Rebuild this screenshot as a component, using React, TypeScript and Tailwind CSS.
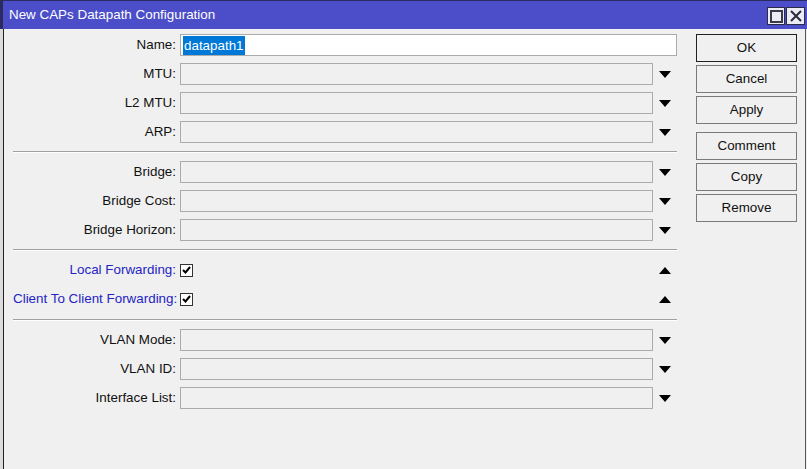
import React from "react";

const font = { fontFamily: '"Liberation Sans", Arial, sans-serif' };

function DownArrow() {
  return (
    <svg width="12" height="7" viewBox="0 0 12 7" className="block">
      <polygon points="0,0 12,0 6,7" fill="#000" />
    </svg>
  );
}

function UpArrow() {
  return (
    <svg width="12" height="7" viewBox="0 0 12 7" className="block">
      <polygon points="0,7 12,7 6,0" fill="#000" />
    </svg>
  );
}

function Label({ text, blue }: { text: string; blue?: boolean }) {
  return (
    <div
      className={
        "w-[163px] shrink-0 text-right whitespace-nowrap text-[13.4px] leading-none " +
        (blue ? "text-[#2424c4]" : "text-[#111]")
      }
    >
      {text}
    </div>
  );
}

function ComboRow({ label }: { label: string }) {
  return (
    <div className="flex items-center h-[22px]">
      <Label text={label} />
      <div className="ml-[4px] w-[475px] h-[22px] border border-[#ababab] bg-[#f0f0f0]" />
      <div className="w-[24px] flex justify-center">
        <DownArrow />
      </div>
    </div>
  );
}

function CheckRow({ label }: { label: string }) {
  return (
    <div className="flex items-center h-[22px]">
      <Label text={label} blue />
      <div className="ml-[4px] w-[13px] h-[13px] border border-[#333] bg-white flex items-center justify-center">
        <svg width="9" height="8" viewBox="0 0 9 8">
          <path d="M1 4 L3.5 6.5 L8 1" stroke="#000" strokeWidth="2" fill="none" />
        </svg>
      </div>
      <div className="flex-1" />
      <div className="w-[24px] flex justify-center">
        <UpArrow />
      </div>
    </div>
  );
}

function Separator({ extra }: { extra?: boolean }) {
  return (
    <div
      className={
        (extra ? "mt-[9px] mb-[8px]" : "my-[8px]") +
        " h-[2px] border-t border-[#a0a0a0] border-b border-b-white"
      }
    />
  );
}

function Btn({ text, primary }: { text: string; primary?: boolean }) {
  return (
    <button
      className={
        "w-[101px] h-[28px] bg-[#f0f0f0] text-[13.4px] text-[#111] border " +
        (primary ? "border-[#222]" : "border-[#7a7a7a]")
      }
    >
      {text}
    </button>
  );
}

export default function App() {
  return (
    <div className="w-[807px] h-[469px] flex flex-col bg-[#f0f0f0] overflow-hidden" style={font}>
      {/* title bar */}
      <div className="h-[29px] shrink-0 flex items-center bg-[#4b4ec8] border-t border-l-[3px] border-[#2a2c60]">
        <span className="ml-[6px] text-white text-[13.4px]">New CAPs Datapath Configuration</span>
        <div className="ml-auto mr-[2px] flex gap-[1px] mt-[2px]">
          <div className="w-[18px] h-[18px] bg-[#ececf4] border border-[#2c2c48] flex items-center justify-center">
            <div className="w-[13px] h-[13px] border-2 border-[#3a3a4a]" />
          </div>
          <div className="w-[19px] h-[18px] bg-[#ececf4] border border-[#2c2c48] flex items-center justify-center">
            <svg width="12" height="12" viewBox="0 0 12 12">
              <path d="M1 1 L11 11 M11 1 L1 11" stroke="#2a2a3a" strokeWidth="2" />
            </svg>
          </div>
        </div>
      </div>

      <div className="flex flex-1">
        <div className="w-[3px] bg-[#dcdcdc]" />
        <div className="w-[1px] bg-[#222]" />
        <div className="flex-1 flex pt-[5px] pl-[9px]">
          {/* form */}
          <div className="w-[664px] flex flex-col">
            <div className="flex flex-col gap-[7px]">
              <div className="flex items-center h-[22px]">
                <Label text="Name:" />
                <div className="ml-[4px] w-[497px] h-[22px] border border-[#ababab] bg-white flex items-center pl-[2px]">
                  <span className="bg-[#0078d7] text-white text-[13.4px] leading-[19px] px-[1px]">datapath1</span>
                </div>
              </div>
              <ComboRow label="MTU:" />
              <ComboRow label="L2 MTU:" />
              <ComboRow label="ARP:" />
            </div>
            <Separator />
            <div className="flex flex-col gap-[7px]">
              <ComboRow label="Bridge:" />
              <ComboRow label="Bridge Cost:" />
              <ComboRow label="Bridge Horizon:" />
            </div>
            <Separator />
            <div className="flex flex-col gap-[7px]">
              <CheckRow label="Local Forwarding:" />
              <CheckRow label="Client To Client Forwarding:" />
            </div>
            <Separator extra />
            <div className="flex flex-col gap-[7px]">
              <ComboRow label="VLAN Mode:" />
              <ComboRow label="VLAN ID:" />
              <ComboRow label="Interface List:" />
            </div>
          </div>

          {/* buttons */}
          <div className="ml-[19px] flex flex-col">
            <div className="flex flex-col gap-[3px]">
              <Btn text="OK" primary />
              <Btn text="Cancel" />
              <Btn text="Apply" />
            </div>
            <div className="mt-[8px] flex flex-col gap-[3px]">
              <Btn text="Comment" />
              <Btn text="Copy" />
              <Btn text="Remove" />
            </div>
          </div>
          <div className="flex-1" />
        </div>
        <div className="w-[1px] bg-[#555]" />
        <div className="w-[1px] bg-[#f0f0f0]" />
      </div>
    </div>
  );
}
